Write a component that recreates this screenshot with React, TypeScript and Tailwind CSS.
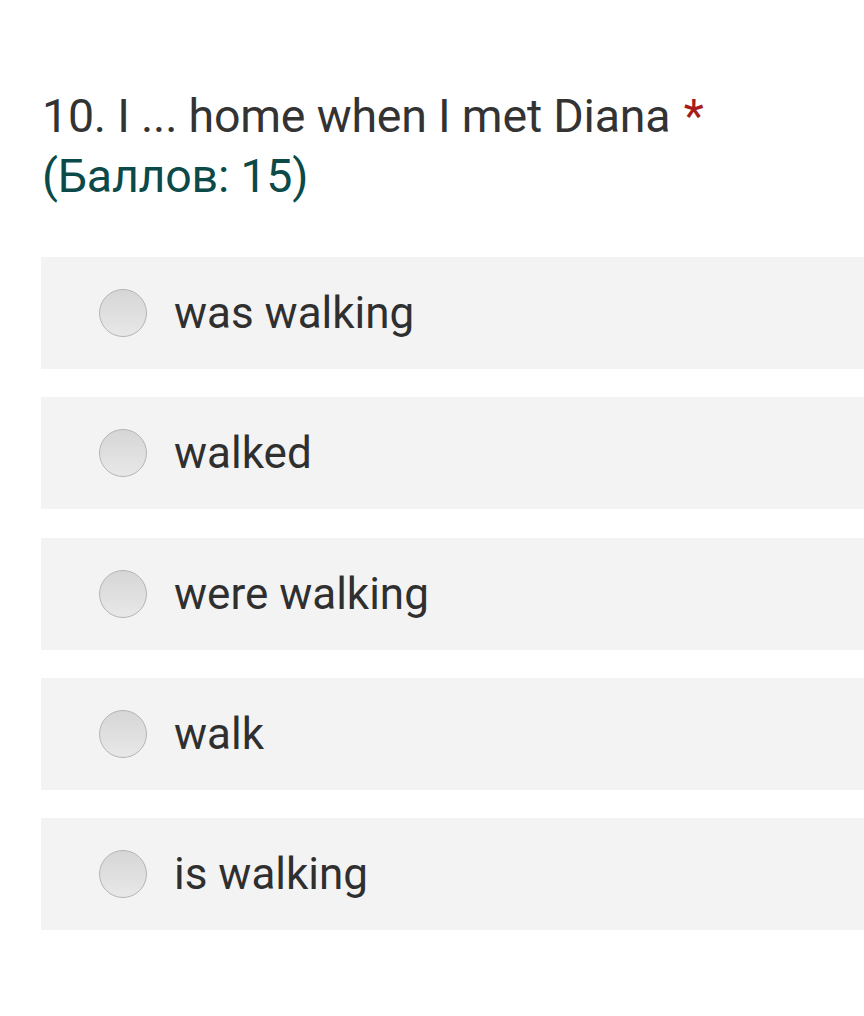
import React from "react";

const options = ["was walking", "walked", "were walking", "walk", "is walking"];

export default function App() {
  return (
    <div className="w-[864px] h-[1016px] bg-white overflow-hidden" style={{ fontFamily: "Roboto, 'Noto Sans', sans-serif" }}>
      <div className="pt-[86px] pl-[42px]">
        <div className="text-[46.5px] leading-[60px] text-[#333333] tracking-[-0.2px]">
          10. I ... home when I met Diana <span className="text-[#a61c1c] ml-[2px]">*</span>
        </div>
        <div className="text-[46.5px] leading-[60px] text-[#0b4a48] tracking-[-0.2px]">(Баллов: 15)</div>
      </div>
      <div className="mt-[51px] ml-[41px] flex flex-col gap-[28.25px]">
        {options.map((o) => (
          <div key={o} className="h-[112px] bg-[#f3f3f3] flex items-center">
            <div className="ml-[58px] w-[48px] h-[48px] rounded-full border border-[#b5b5b5] bg-gradient-to-b from-[#d6d6d6] to-[#e8e8e8]" />
            <span className="ml-[27px] text-[44px] text-[#2f2f2f]">{o}</span>
          </div>
        ))}
      </div>
    </div>
  );
}
